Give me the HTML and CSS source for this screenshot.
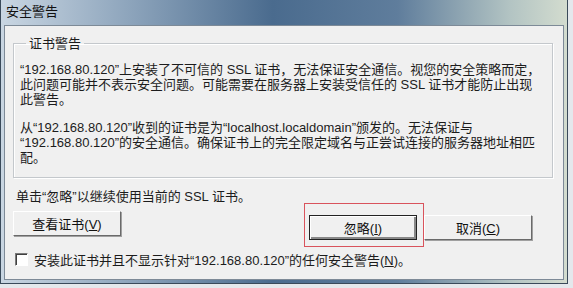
FILE: index.html
```html
<!DOCTYPE html>
<html lang="zh-CN">
<head>
  <meta charset="UTF-8" />
  <title>安全警告</title>
  <link rel="stylesheet" href="styles.css">
</head>
<body>
  <div class="window">
    <div class="titlebar">安全警告</div>
    <div class="client">
      <fieldset class="group">
        <legend>证书警告</legend>
        <p>“192.168.80.120”上安装了不可信的 SSL 证书，无法保证安全通信。视您的安全策略而定，此问题可能并不表示安全问题。可能需要在服务器上安装受信任的 SSL 证书才能防止出现此警告。</p>
        <p>从“192.168.80.120”收到的证书是为“localhost.localdomain”颁发的。无法保证与“192.168.80.120”的安全通信。确保证书上的完全限定域名与正尝试连接的服务器地址相匹配。</p>
      </fieldset>

      <div class="hint">单击“忽略”以继续使用当前的 SSL 证书。</div>

      <div class="buttons">
        <button class="btn">查看证书(<u>V</u>)</button>
        <div class="right-buttons">
          <div class="focus-mark">
            <button class="btn default">忽略(<u>I</u>)</button>
          </div>
          <button class="btn">取消(<u>C</u>)</button>
        </div>
      </div>

      <label class="check">
        <span class="box"></span>
        <span>安装此证书并且不显示针对“192.168.80.120”的任何安全警告(<u>N</u>)。</span>
      </label>
    </div>
  </div>
</body>
</html>
```

FILE: styles.css
```css
* {
  box-sizing: border-box;
}

body {
  margin: 0;
  background: #e4e8ec;
  font-family: "Liberation Sans", "Noto Sans CJK SC", sans-serif;
  font-size: 13px;
  color: #1c1c1c;
}

.window {
  width: 568px;
  height: 284px;
  display: flex;
  flex-direction: column;
  border: 1px solid #3a4a5a;
  border-top: none;
  background: linear-gradient(90deg, #c9d6e2 0%, #8fa6bd 22%, #4a6b8e 48%, #5f7d9c 70%, #b3c4c3 90%, #d3dccf 100%);
  padding: 0 3px 3px 3px;
}

.titlebar {
  height: 25px;
  line-height: 24px;
  padding-left: 2px;
  font-size: 13px;
  color: #111;
}

.client {
  flex: 1;
  background: #f0f0f0;
  border: 1px solid #7d8a97;
  padding: 10px 10px 0 8px;
}

.group {
  margin: 0;
  padding: 11px 8px 6px 6px;
  border: 1px solid #c4c8cc;
  box-shadow: inset 1px 1px 0 #fff, 1px 1px 0 #fff;
  height: 142px;
}

.group legend {
  padding: 0 3px;
  margin-left: 6px;
  line-height: 15px;
}

.group p {
  margin: 0 0 13px;
  line-height: 15px;
}

.hint {
  margin-top: 11px;
  padding-left: 3px;
  line-height: 15px;
}

.buttons {
  display: flex;
  justify-content: space-between;
  align-items: center;
  margin-top: -1px;
  padding-right: 21px;
  height: 44px;
}

.right-buttons {
  display: flex;
  align-items: center;
}

.btn {
  font: inherit;
  color: #111;
  width: 108px;
  height: 25px;
  padding: 0;
  background: #f0f0f0;
  border: 1px solid;
  border-color: #fff #6a6a6a #6a6a6a #fff;
  box-shadow: 1px 1px 0 #a0a0a0;
}

.buttons > .btn {
  margin-top: -3px;
}

.right-buttons > .btn {
  margin-top: 5px;
}

.btn.default {
  border: 1px solid #222;
  box-shadow: inset 1px 1px 0 #fff, inset -2px -2px 0 #888;
}

.focus-mark {
  border: 1px solid #d9535c;
  padding: 11px 6px 6px 4px;
}

.check {
  display: flex;
  align-items: center;
  gap: 6px;
  margin-top: 3px;
  padding-left: 2px;
}

.check .box {
  width: 13px;
  height: 13px;
  background: #fff;
  border: 1px solid;
  border-color: #7a7a7a #fff #fff #7a7a7a;
  box-shadow: inset 1px 1px 0 #404040;
}
```
